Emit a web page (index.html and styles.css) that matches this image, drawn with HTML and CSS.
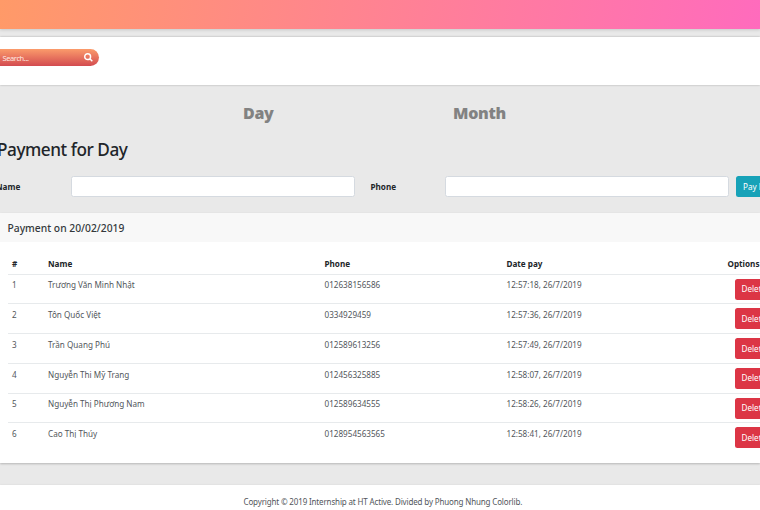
FILE: index.html
```html
<!DOCTYPE html>
<html lang="en">
<head>
<meta charset="utf-8">
<title>Payment for Day</title>
<link rel="stylesheet" href="styles.css">
</head>
<body>
<header class="topbar"></header>
<nav class="toolbar">
  <div class="search">
    <span>Search...</span>
    <svg class="search-icon" viewBox="0 0 16 16"><circle cx="6.5" cy="6.5" r="5.2"/><path d="M10.4 10.4 14.8 14.8"/></svg>
  </div>
</nav>
<main>
  <div class="tabs"><a class="tab-day">Day</a><a class="tab-month">Month</a></div>
  <h1>Payment for Day</h1>
  <form class="filters">
    <label class="label-name">Name</label><input type="text">
    <label class="label-phone">Phone</label><input type="text">
    <button type="button" class="btn pay">Pay Now</button>
  </form>
  <section class="card">
    <h2>Payment on 20/02/2019</h2>
    <div class="table">
      <div class="row head"><span>#</span><span>Name</span><span>Phone</span><span>Date pay</span><span>Options</span></div>
      <div class="row"><span>1</span><span>Trương Văn Minh Nhật</span><span>012638156586</span><span>12:57:18, 26/7/2019</span><button class="btn delete">Delete</button></div>
      <div class="row"><span>2</span><span>Tôn Quốc Việt</span><span>0334929459</span><span>12:57:36, 26/7/2019</span><button class="btn delete">Delete</button></div>
      <div class="row"><span>3</span><span>Trần Quang Phú</span><span>012589613256</span><span>12:57:49, 26/7/2019</span><button class="btn delete">Delete</button></div>
      <div class="row"><span>4</span><span>Nguyễn Thi Mỹ Trang</span><span>012456325885</span><span>12:58:07, 26/7/2019</span><button class="btn delete">Delete</button></div>
      <div class="row"><span>5</span><span>Nguyễn Thị Phương Nam</span><span>012589634555</span><span>12:58:26, 26/7/2019</span><button class="btn delete">Delete</button></div>
      <div class="row"><span>6</span><span>Cao Thị Thúy</span><span>0128954563565</span><span>12:58:41, 26/7/2019</span><button class="btn delete">Delete</button></div>
    </div>
  </section>
</main>
<footer><p>Copyright © 2019 Internship at HT Active. Divided by Phuong Nhung Colorlib.</p></footer>
</body>
</html>
```
FILE: styles.css
```css
* { box-sizing: border-box; }
html, body { height: 510px; overflow: hidden; }
body {
  margin: 0;
  display: flex;
  flex-direction: column;
  background: #e9e9e9;
  color: #212529;
  font: 8.15px/12px "Noto Sans", "Open Sans", sans-serif;
}
h1, h2, p { margin: 0; }
.topbar {
  height: 29px;
  flex: none;
  background: linear-gradient(100deg, #ff9a68 0%, #ff6bbd 100%);
  box-shadow: 0 1px 3px rgba(0, 0, 0, .15);
}
.toolbar {
  height: 48px;
  flex: none;
  margin-top: 8px;
  padding-top: 12px;
  background: #fff;
  box-shadow: 0 0 2px rgba(0, 0, 0, .28);
}
.search {
  width: 99px;
  height: 17px;
  padding: 0 6px 0 2.5px;
  display: flex;
  align-items: center;
  justify-content: space-between;
  border-radius: 0 9px 9px 0;
  background: linear-gradient(#fb9b6b, #d34b50);
  color: #ffe9e2;
  font-size: 7.5px;
  letter-spacing: -.4px;
}
.search-icon {
  width: 9px;
  height: 9px;
  fill: none;
  stroke: #fff;
  stroke-width: 2.6;
}
main { flex: none; height: 400px; }
.tabs {
  height: 46px;
  padding: 17px 0 0 243px;
  display: flex;
  color: #828282;
  font: 900 16px/23px "Noto Sans", sans-serif;
  letter-spacing: -.3px;
}
.tab-day { width: 210px; }
h1 {
  height: 37px;
  margin-left: -3px;
  font-size: 17.2px;
  font-weight: 500;
  line-height: 37px;
  letter-spacing: -.45px;
}
.filters {
  height: 45px;
  padding-top: 8px;
  display: flex;
  align-items: flex-start;
}
.filters label { flex: none; line-height: 21px; font-weight: 700; }
.label-name { width: 75px; margin-left: -4px; }
.label-phone { width: 74.5px; margin-left: 16px; }
.filters input {
  width: 283.5px;
  height: 21px;
  flex: none;
  border: 1px solid #d5dae0;
  border-radius: 2.5px;
  background: #fff;
}
.btn {
  height: 21px;
  flex: none;
  padding: 0 7px;
  border: 0;
  border-radius: 2.5px;
  color: #fff;
  font: 8.15px/20px "Noto Sans", sans-serif;
  text-align: left;
  white-space: nowrap;
}
.pay { margin-left: 7.5px; background: #17a2b8; }
.delete { width: 40px; background: #dc3545; margin: 4px 0 0 7px; }
.card {
  height: 250px;
  background: #fff;
  box-shadow: 0 1px 2px rgba(0, 0, 0, .22);
}
.card h2 {
  height: 29px;
  padding-left: 7.5px;
  background: #f8f8f8;
  color: #34383c;
  font-size: 10.3px;
  font-weight: 500;
  line-height: 30px;
}
.table { width: 780px; margin-left: 8px; padding-top: 12.2px; }
.row {
  height: 29.75px;
  display: grid;
  grid-template-columns: 36px 276.5px 182px 221px 60px;
  padding-left: 4px;
  border-top: 1px solid #e7eaec;
  align-items: start;
  color: #52565b;
}
.row > span { padding-top: 4.7px; }
.head {
  height: 19.5px;
  border-top-color: transparent;
  color: #212529;
  font-weight: 700;
}
.head > span { padding-top: 2.8px; }
footer {
  height: 25px;
  flex: none;
  background: #fff;
  box-shadow: 0 0 2px rgba(0, 0, 0, .08);
  color: #52565b;
}
footer p {
  padding: 11px 0 0 243.5px;
  font-size: 8px;
  letter-spacing: -.15px;
  white-space: nowrap;
}
```
